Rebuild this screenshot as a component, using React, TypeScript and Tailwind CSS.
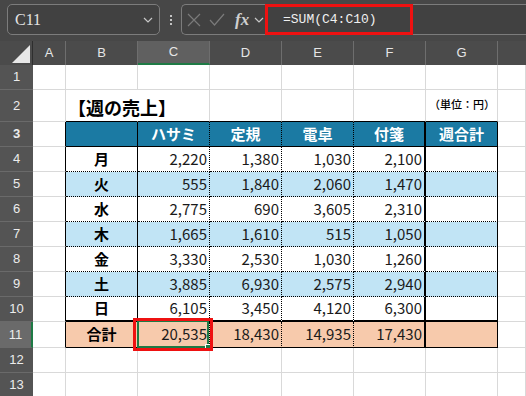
import React from "react";

type Side = "grid" | "solid" | "dotted" | "thick" | "none";

const RB: Record<Side, string> = {
  grid: "border-r border-r-[#d9d9d9]",
  solid: "border-r border-r-black",
  dotted: "border-r border-r-black [border-right-style:dotted]",
  thick: "border-r-2 border-r-black",
  none: "border-r border-r-white",
};
const BB: Record<Side, string> = {
  grid: "border-b border-b-[#d9d9d9]",
  solid: "border-b border-b-black",
  dotted: "border-b border-b-black [border-bottom-style:dotted]",
  thick: "border-b-2 border-b-black",
  none: "border-b border-b-white",
};

const JP = { fontFamily: '"Noto Sans CJK JP", "Noto Sans", sans-serif' };

type CellProps = {
  w: string;
  r: Side;
  b: Side;
  bg?: string;
  align?: "left" | "center" | "right";
  extra?: string;
  children?: React.ReactNode;
};

function Cell({ w, r, b, bg = "bg-white", align = "right", extra = "", children }: CellProps) {
  const al =
    align === "center" ? "justify-center" : align === "left" ? "justify-start pl-[2px]" : "justify-end pr-[2px]";
  return (
    <div className={`${w} shrink-0 h-full flex items-center ${al} ${RB[r]} ${BB[b]} ${bg} ${extra}`}>{children}</div>
  );
}

function RowHead({ n, active }: { n: number; active?: boolean }) {
  return (
    <div
      className={`w-[33px] shrink-0 h-full flex items-center justify-center text-[13px] text-[#ececec] border-b border-b-[#6a6a6a] ${
        active ? "bg-[#6a6a6a] border-r-2 border-r-[#1e7a45]" : "bg-[#545454]"
      }`}
      style={{ fontFamily: '"Liberation Sans", Arial, sans-serif' }}
    >
      {n}
    </div>
  );
}

const days = [
  { d: "月", v: ["2,220", "1,380", "1,030", "2,100"], bg: "bg-white" },
  { d: "火", v: ["555", "1,840", "2,060", "1,470"], bg: "bg-[#c1e4f5]" },
  { d: "水", v: ["2,775", "690", "3,605", "2,310"], bg: "bg-white" },
  { d: "木", v: ["1,665", "1,610", "515", "1,050"], bg: "bg-[#c1e4f5]" },
  { d: "金", v: ["3,330", "2,530", "1,030", "1,260"], bg: "bg-white" },
  { d: "土", v: ["3,885", "6,930", "2,575", "2,940"], bg: "bg-[#c1e4f5]" },
  { d: "日", v: ["6,105", "3,450", "4,120", "6,300"], bg: "bg-white" },
];

function EmptyRow({ n, h }: { n: number; h: string }) {
  return (
    <div className={`flex ${h}`}>
      <RowHead n={n} />
      <Cell w="w-[33px]" r="grid" b="grid" />
      <Cell w="w-[72px]" r="grid" b="grid" />
      <Cell w="w-[72px]" r="grid" b="grid" />
      <Cell w="w-[72px]" r="grid" b="grid" />
      <Cell w="w-[72px]" r="grid" b="grid" />
      <Cell w="w-[72px]" r="grid" b="grid" />
      <Cell w="w-[72px]" r="grid" b="grid" />
      <Cell w="flex-1" r="grid" b="grid" />
    </div>
  );
}

function Chevron({ color = "#c8c8c8" }: { color?: string }) {
  return (
    <svg width="10" height="6" viewBox="0 0 10 6">
      <polyline points="1,1 5,5 9,1" fill="none" stroke={color} strokeWidth="1.2" />
    </svg>
  );
}

export default function App() {
  const colHead = "h-full shrink-0 flex items-center justify-center border-r border-r-[#6e6e6e]";
  return (
    <div className="w-[526px] h-[396px] overflow-hidden bg-[#474747] select-none" style={JP}>
      {/* formula bar */}
      <div className="h-[41px] flex items-start pt-[4px] bg-[#474747]">
        <div className="ml-[7px] w-[153px] h-[31px] shrink-0 rounded-[5px] border border-[#7c7c7c] bg-[#414141] flex items-center pl-[7px] pr-[6px]">
          <span
            className="text-[16px] text-[#e4e4e4] leading-none"
            style={{ fontFamily: '"Liberation Serif", "Times New Roman", serif' }}
          >
            C11
          </span>
          <span className="ml-auto flex items-center">
            <Chevron />
          </span>
        </div>
        <div className="w-[21px] h-[31px] shrink-0 flex flex-col items-center justify-center gap-[2px]">
          <span className="w-[2px] h-[2px] bg-[#c4c4c4]" />
          <span className="w-[2px] h-[2px] bg-[#c4c4c4]" />
          <span className="w-[2px] h-[2px] bg-[#c4c4c4]" />
        </div>
        <div className="w-[84px] h-[31px] shrink-0 rounded-l-[5px] border border-r-0 border-[#7c7c7c] bg-[#414141] flex items-center pl-[5px]">
          <svg width="14" height="14" viewBox="0 0 14 14">
            <path d="M1 1 L13 13 M13 1 L1 13" stroke="#7a7a7a" strokeWidth="1.2" fill="none" />
          </svg>
          <svg width="16" height="14" viewBox="0 0 16 14" className="ml-[8px]">
            <polyline points="1,7 5.5,12 15,1" stroke="#7a7a7a" strokeWidth="1.2" fill="none" />
          </svg>
          <span
            className="ml-[10px] text-[17px] italic font-bold text-[#cfcfcf] leading-none"
            style={{ fontFamily: '"Liberation Serif", "Times New Roman", serif' }}
          >
            fx
          </span>
          <span className="ml-[5px] flex items-center">
            <Chevron />
          </span>
        </div>
        <div className="w-[148px] h-[31px] shrink-0 border-[3px] border-[#ee1111] bg-[#414141] flex items-center pl-[15px]">
          <span
            className="text-[13px] text-[#f0f0f0] leading-none"
            style={{ fontFamily: '"Liberation Mono", "DejaVu Sans Mono", monospace' }}
          >
            =SUM(C4:C10)
          </span>
        </div>
        <div className="flex-1 h-[31px] border-y border-[#7c7c7c] bg-[#414141]" />
      </div>

      {/* column headers */}
      <div
        className="flex h-[24px] bg-[#4b4b4b] text-[13px] text-[#e6e6e6]"
        style={{ fontFamily: '"Liberation Sans", Arial, sans-serif' }}
      >
        <div className="w-[33px] h-full shrink-0 border-r border-r-[#2e2e2e] flex items-end justify-end pr-[1px] pb-[2px]">
          <svg width="19" height="18" viewBox="0 0 19 18">
            <polygon points="18,0 18,18 0,18" fill="#e8e8e8" />
          </svg>
        </div>
        <div className={`${colHead} w-[33px]`}>A</div>
        <div className={`${colHead} w-[72px]`}>B</div>
        <div className={`${colHead} w-[72px] bg-[#606060] border-b-2 border-b-[#1e7a45]`}>C</div>
        <div className={`${colHead} w-[72px]`}>D</div>
        <div className={`${colHead} w-[72px]`}>E</div>
        <div className={`${colHead} w-[72px]`}>F</div>
        <div className={`${colHead} w-[72px]`}>G</div>
        <div className="flex-1 h-full" />
      </div>

      {/* row 1 */}
      <EmptyRow n={1} h="h-[25px]" />

      {/* row 2 */}
      <div className="flex h-[32px]">
        <RowHead n={2} />
        <Cell w="w-[33px]" r="grid" b="grid" />
        <Cell w="w-[72px]" r="none" b="solid" align="left" extra="items-end pb-[2px] overflow-visible relative z-10">
          <span className="text-[18px] font-bold text-black whitespace-nowrap leading-[24px]">【週の売上】</span>
        </Cell>
        <Cell w="w-[72px]" r="grid" b="solid" />
        <Cell w="w-[72px]" r="grid" b="solid" />
        <Cell w="w-[72px]" r="grid" b="solid" />
        <Cell w="w-[72px]" r="grid" b="solid" />
        <Cell w="w-[72px]" r="grid" b="solid">
          <span className="text-[11px] font-medium text-black whitespace-nowrap mb-[2px]">（単位：円）</span>
        </Cell>
        <Cell w="flex-1" r="grid" b="grid" />
      </div>

      {/* row 3 header */}
      <div className="flex h-[25px] text-[15px] font-bold text-white">
        <RowHead n={3} />
        <Cell w="w-[33px]" r="solid" b="grid" />
        <Cell w="w-[72px]" r="solid" b="solid" bg="bg-[#1b7aa3]" align="center" />
        <Cell w="w-[72px]" r="dotted" b="solid" bg="bg-[#1b7aa3]" align="center">
          ハサミ
        </Cell>
        <Cell w="w-[72px]" r="dotted" b="solid" bg="bg-[#1b7aa3]" align="center">
          定規
        </Cell>
        <Cell w="w-[72px]" r="dotted" b="solid" bg="bg-[#1b7aa3]" align="center">
          電卓
        </Cell>
        <Cell w="w-[72px]" r="thick" b="solid" bg="bg-[#1b7aa3]" align="center">
          付箋
        </Cell>
        <Cell w="w-[72px]" r="solid" b="solid" bg="bg-[#1b7aa3]" align="center">
          週合計
        </Cell>
        <Cell w="flex-1" r="grid" b="grid" />
      </div>

      {/* day rows */}
      {days.map((row, i) => {
        const b: Side = i === 6 ? "thick" : "dotted";
        return (
          <div key={row.d} className="flex h-[25px] text-[15px] text-[#1a1a1a]">
            <RowHead n={4 + i} />
            <Cell w="w-[33px]" r="solid" b="grid" />
            <Cell w="w-[72px]" r="solid" b={b} bg={row.bg} align="center" extra="font-bold text-black">
              {row.d}
            </Cell>
            <Cell w="w-[72px]" r="dotted" b={b} bg={row.bg}>
              {row.v[0]}
            </Cell>
            <Cell w="w-[72px]" r="dotted" b={b} bg={row.bg}>
              {row.v[1]}
            </Cell>
            <Cell w="w-[72px]" r="dotted" b={b} bg={row.bg}>
              {row.v[2]}
            </Cell>
            <Cell w="w-[72px]" r="thick" b={b} bg={row.bg}>
              {row.v[3]}
            </Cell>
            <Cell w="w-[72px]" r="solid" b={b} bg={row.bg} />
            <Cell w="flex-1" r="grid" b="grid" />
          </div>
        );
      })}

      {/* row 11 total */}
      <div className="flex h-[26px] text-[15px] text-[#1a1a1a]">
        <RowHead n={11} active />
        <Cell w="w-[33px]" r="solid" b="grid" />
        <Cell w="w-[72px]" r="solid" b="solid" bg="bg-[#f7caac]" align="center" extra="font-bold text-black">
          合計
        </Cell>
        <Cell w="w-[72px]" r="dotted" b="solid" bg="bg-[#f7caac]" extra="relative">
          20,535
          <div className="absolute -left-[1px] -top-[2px] right-0 -bottom-[1px] border-2 border-[#1e7a45] pointer-events-none" />
          <div className="absolute right-[-2px] bottom-[-3px] w-[6px] h-[6px] bg-[#1e7a45] border border-white" />
          <div className="absolute -left-[5px] -top-[4px] -right-[4px] -bottom-[4px] border-[3px] border-[#ee1111] z-20 pointer-events-none" />
        </Cell>
        <Cell w="w-[72px]" r="dotted" b="solid" bg="bg-[#f7caac]">
          18,430
        </Cell>
        <Cell w="w-[72px]" r="dotted" b="solid" bg="bg-[#f7caac]">
          14,935
        </Cell>
        <Cell w="w-[72px]" r="thick" b="solid" bg="bg-[#f7caac]">
          17,430
        </Cell>
        <Cell w="w-[72px]" r="solid" b="solid" bg="bg-[#f7caac]" />
        <Cell w="flex-1" r="grid" b="grid" />
      </div>

      <EmptyRow n={12} h="h-[25px]" />
      <EmptyRow n={13} h="h-[25px]" />
    </div>
  );
}
